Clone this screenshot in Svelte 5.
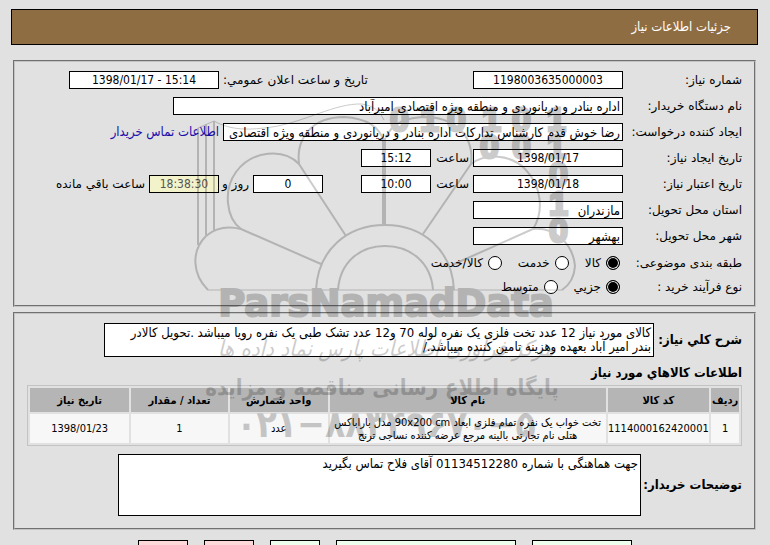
<script lang="ts">
  let subject = $state('goods');
  let process = $state('small');

  const subjects = [
    { value: 'goods', label: 'کالا' },
    { value: 'service', label: 'خدمت' },
    { value: 'both', label: 'کالا/خدمت' }
  ];

  const processes = [
    { value: 'small', label: 'جزیي' },
    { value: 'medium', label: 'متوسط' }
  ];

  const columns = [
    { title: 'ردیف', width: 4 },
    { title: 'کد کالا', width: 14.5 },
    { title: 'نام کالا', width: 39.5 },
    { title: 'واحد شمارش', width: 14 },
    { title: 'تعداد / مقدار', width: 13.8 },
    { title: 'تاریخ نیاز', width: 14.2 }
  ];

  const items = [
    {
      row: '1',
      code: '1114000162420001',
      name: 'تخت خواب یک نفره تمام فلزی ابعاد 90x200 cm مدل باراباکس هتلی نام تجارتی بالینه مرجع عرضه کننده نساجی ترنج',
      unit: 'عدد',
      quantity: '1',
      date: '1398/01/23'
    }
  ];

  const description =
    'کالای مورد نیاز 12 عدد تخت فلزی یک نفره لوله 70 و12 عدد تشک طبی یک نفره رویا میباشد .تحویل کالادر بندر امیر آباد بعهده وهزینه تامین کننده میباشد./';
  const remarks = 'جهت هماهنگی با شماره 01134512280 آقای فلاح تماس بگیرید';
</script>

<div class="page" dir="rtl">
  <header>جزئیات اطلاعات نیاز</header>

  <section class="panel details">
    <div class="row">
      <label class="caption" for="number">شماره نیاز:</label>
      <input class="medium center" id="number" dir="ltr" value="1198003635000003" readonly />
      <label class="announce" for="announce">تاریخ و ساعت اعلان عمومي:</label>
      <input class="medium center" id="announce" dir="ltr" value="1398/01/17 - 15:14" readonly />
    </div>
    <div class="row">
      <label class="caption" for="buyer">نام دستگاه خریدار:</label>
      <input class="widest" id="buyer" value="اداره بنادر و دریانوردی و منطقه ویژه اقتصادی امیرآباد" readonly />
    </div>
    <div class="row">
      <label class="caption" for="creator">ایجاد کننده درخواست:</label>
      <input class="wide" id="creator" value="رضا خوش قدم کارشناس تدارکات اداره بنادر و دریانوردی و منطقه ویژه اقتصادی امیرآباد" readonly />
      <a href="#contact">اطلاعات تماس خریدار</a>
    </div>
    <div class="row">
      <label class="caption" for="created">تاریخ ایجاد نیاز:</label>
      <input class="medium center" id="created" dir="ltr" value="1398/01/17" readonly />
      <label class="hour" for="created-hour">ساعت</label>
      <input class="short center" id="created-hour" dir="ltr" value="15:12" readonly />
    </div>
    <div class="row">
      <label class="caption" for="valid">تاریخ اعتبار نیاز:</label>
      <input class="medium center" id="valid" dir="ltr" value="1398/01/18" readonly />
      <label class="hour" for="valid-hour">ساعت</label>
      <input class="short center" id="valid-hour" dir="ltr" value="10:00" readonly />
      <input class="short center days" id="days" dir="ltr" value="0" readonly />
      <label class="day" for="days">روز و</label>
      <input class="short center remaining" id="remaining" dir="ltr" value="18:38:30" readonly />
      <label for="remaining">ساعت باقي مانده</label>
    </div>
    <div class="row">
      <label class="caption" for="province">استان محل تحویل:</label>
      <input class="medium" id="province" value="مازندران" readonly />
    </div>
    <div class="row">
      <label class="caption" for="city">شهر محل تحویل:</label>
      <input class="medium" id="city" value="بهشهر" readonly />
    </div>
    <div class="choices">
      <div class="row" role="radiogroup" aria-labelledby="subject-caption">
        <span class="caption" id="subject-caption">طبقه بندی موضوعی:</span>
        {#each subjects as option}
          <label class="choice">
            <input type="radio" name="subject" value={option.value} bind:group={subject} />
            {option.label}
          </label>
        {/each}
      </div>
      <div class="row" role="radiogroup" aria-labelledby="process-caption">
        <span class="caption" id="process-caption">نوع فرآیند خرید :</span>
        {#each processes as option}
          <label class="choice">
            <input type="radio" name="process" value={option.value} bind:group={process} />
            {option.label}
          </label>
        {/each}
      </div>
    </div>
  </section>

  <section class="panel goods">
    <div class="note">
      <label for="description">شرح کلي نیاز:</label>
      <textarea class="description" id="description" rows="2" value={description} readonly></textarea>
    </div>

    <h2>اطلاعات کالاهاي مورد نیاز</h2>
    <table>
      <colgroup>
        {#each columns as column}
          <col style={`width: ${column.width}%`} />
        {/each}
      </colgroup>
      <thead>
        <tr>
          {#each columns as column}
            <th>{column.title}</th>
          {/each}
        </tr>
      </thead>
      <tbody>
        {#each items as item}
          <tr>
            <td>{item.row}</td>
            <td>{item.code}</td>
            <td>{item.name}</td>
            <td>{item.unit}</td>
            <td>{item.quantity}</td>
            <td>{item.date}</td>
          </tr>
        {/each}
      </tbody>
    </table>

    <div class="note">
      <label for="remarks">توضیحات خریدار:</label>
      <textarea class="remarks" id="remarks" rows="4" value={remarks} readonly></textarea>
    </div>
  </section>

  <footer>
    <button class="green reply" aria-label="پاسخ به نیاز"></button>
    <button class="green files" aria-label="مشاهده مدارک پیوستی"></button>
    <button class="green" aria-label="چاپ"></button>
    <button class="pink" aria-label="بازگشت"></button>
    <button class="pink" aria-label="خروج"></button>
  </footer>

  <svg class="watermark" viewBox="185 90 400 380" aria-hidden="true">
    <g class="lines">
      <path d="M198 128L214 121C232 131 250 130 272 127C305 122 335 103 362 104Q378 106 384 120" stroke-width="1" />
      <path d="M198 245V128M206 235V124M214 230V121" />
      <path d="M208 290C192 274 191 251 206 236Q220 224 241 229L321 264" />
      <path d="M241 229C226 218 223 190 236 172C252 150 284 148 299 164L346 236" />
      <path d="M299 164C296 138 312 117 344 117Q378 119 384 142" />
      <path class="stem" d="M384 224V138" />
      <path d="M386 138Q393 117 428 117C460 119 474 140 471 164L423 234" />
      <path d="M471 164C486 153 510 154 525 169C542 186 544 212 533 229L452 265" />
      <path d="M533 229C555 227 573 244 575 266Q574 282 562 290" />
      <path d="M316 290C318 250 347 225 385 225S452 250 454 290" />
      <path d="M338 290C340 262 360 246 385 246S431 262 433 290" />
      <path class="base" d="M208 290H562" />
    </g>
    <g class="digits">
      <text x="390" y="131">0</text>
      <text x="420" y="131">1</text>
      <text x="447" y="131">0</text>
      <text x="482" y="131">1</text>
      <text x="512" y="131">0</text>
      <text x="547" y="131">1</text>
      <text x="480" y="158">0</text>
      <text x="512" y="158">0</text>
      <text x="547" y="158">1</text>
      <text x="549" y="186">0</text>
      <text x="549" y="215">1</text>
      <text x="549" y="242">0</text>
    </g>
    <text class="brand" x="386" y="316">ParsNamadData</text>
    <text class="script" x="386" y="356">مرکز فرآوری اطلاعات پارس نماد داده ها</text>
    <text class="slogan" x="382" y="395">پایگاه اطلاع رسانی مناقصه و مزایده</text>
    <text class="phone" x="386" y="437">۰۲۱−۸۸۳۴۹۶۷۰−۵</text>
  </svg>
</div>

<style>
  :global(body) {
    background: #e1e1e1;
    margin: 0;
  }

  .page {
    color: #000;
    font-family: 'DejaVu Sans', sans-serif;
    font-size: 12px;
    line-height: 16px;
    overflow: hidden;
    padding: 9px 12px 0 11px;
    position: relative;
  }

  header,
  input,
  textarea,
  a,
  .note label,
  h2,
  table {
    font-family: 'DejaVu Sans Condensed', 'DejaVu Sans', sans-serif;
    font-size: 13px;
  }

  header {
    background: #8f6d42;
    border: 1px solid #000;
    color: #fff;
    line-height: 34px;
    padding: 0 26px;
  }

  .panel {
    border: 2px groove #c4c4c4;
    margin: 0 2px;
  }

  .details {
    margin-top: 15px;
    padding: 5px 12px 6px;
  }

  .goods {
    margin-top: 5px;
    padding: 9px 12px 12px;
  }

  .row {
    align-items: center;
    display: flex;
    gap: 4px;
    height: 26px;
    white-space: nowrap;
  }

  .caption {
    flex: none;
    width: 115px;
  }

  input,
  textarea {
    background: #fff;
    border: 1px solid #000;
    border-radius: 0;
    box-sizing: border-box;
    color: #000;
    flex: none;
    margin: 0;
    outline: 0;
    padding: 0 2px;
  }

  input {
    height: 18px;
  }

  .center {
    font-size: 12px;
    text-align: center;
  }

  .short {
    width: 70px;
  }

  .medium {
    width: 150px;
  }

  .wide {
    width: 400px;
  }

  .widest {
    width: 450px;
  }

  .announce {
    margin-right: auto;
  }

  .row #announce {
    margin-left: 42px;
  }

  .hour {
    width: 34px;
  }

  .days {
    margin-right: 34px;
  }

  .day {
    width: 26px;
  }

  .remaining {
    background: #f3f3cb;
    color: #555;
  }

  a {
    color: #1a0dab;
    text-decoration: none;
  }

  .choices {
    padding-top: 2px;
  }

  .choices .row {
    height: 24px;
  }

  .choice {
    align-items: center;
    display: flex;
    gap: 5px;
    margin: 0 3px 0 9px;
  }

  .choice input {
    appearance: none;
    border-radius: 50%;
    height: 14px;
    padding: 0;
    width: 14px;
  }

  .choice input:checked {
    background: #000;
    box-shadow: inset 0 0 0 1px #fff;
  }

  .note {
    align-items: center;
    display: flex;
    justify-content: space-between;
  }

  .note label,
  h2 {
    font-weight: bold;
  }

  .note label {
    flex: 1;
    white-space: nowrap;
  }

  textarea {
    display: block;
    line-height: 14px;
    overflow: hidden;
    padding: 2px 2px 2px 16px;
    resize: none;
  }

  .description {
    height: 34px;
    margin-left: 77px;
    width: 550px;
  }

  .remarks {
    height: 62px;
    margin-left: 91px;
    width: 523px;
  }

  h2 {
    line-height: 16px;
    margin: 8px 0 4px;
  }

  table {
    border: 1px solid #c3c3c3;
    border-spacing: 2px;
    font-size: 11px;
    line-height: 13px;
    margin-bottom: 8px;
    table-layout: fixed;
    width: 100%;
  }

  th,
  td {
    padding: 0;
    text-align: center;
  }

  th {
    background: #b5b5b5;
    height: 24px;
    white-space: nowrap;
  }

  td {
    background: #f7f7f7;
    height: 29px;
  }

  footer {
    display: flex;
    gap: 16px;
    height: 5px;
    justify-content: center;
    margin-top: 10px;
    overflow: hidden;
  }

  button {
    border: 1px solid #000;
    flex: none;
    height: 24px;
    padding: 0;
    width: 50px;
  }

  .green {
    background: #edffed;
  }

  .pink {
    background: #ffd9d9;
  }

  .reply {
    width: 100px;
  }

  .files {
    width: 180px;
  }

  .watermark {
    height: 380px;
    left: 0;
    margin: 0 auto;
    opacity: 0.2;
    pointer-events: none;
    position: absolute;
    right: 0;
    top: 90px;
    width: 400px;
  }

  .lines {
    fill: none;
    stroke: #000;
    stroke-width: 2;
  }

  .stem {
    stroke-width: 4;
  }

  .base {
    stroke-width: 1;
  }

  .digits,
  .brand {
    direction: ltr;
    font-weight: bold;
    stroke: #000;
  }

  .digits {
    font-family: 'Liberation Sans', Arial, sans-serif;
    font-size: 34px;
    stroke-width: 3;
  }

  .watermark > text {
    text-anchor: middle;
  }

  .brand {
    font-size: 37px;
    stroke-width: 2;
  }

  .script {
    font-family: 'DejaVu Sans Condensed', 'DejaVu Sans', sans-serif;
    font-size: 22px;
    font-style: italic;
  }

  .slogan {
    font-family: 'DejaVu Sans Condensed', 'DejaVu Sans', sans-serif;
    font-size: 22px;
    font-weight: bold;
  }

  .phone {
    direction: ltr;
    font-family: 'DejaVu Sans Condensed', 'DejaVu Sans', sans-serif;
    font-size: 37px;
    font-weight: bold;
  }
</style>
